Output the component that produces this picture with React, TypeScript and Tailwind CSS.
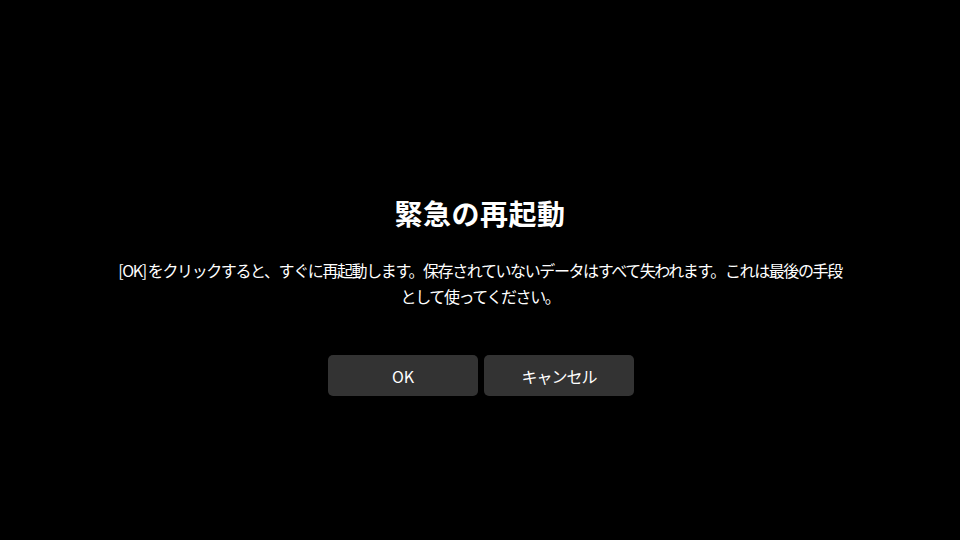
import React from 'react';

export default function App() {
  return (
    <div
      className="w-[960px] h-[540px] bg-black text-white flex flex-col items-center pt-[195px] overflow-hidden"
      style={{ fontFamily: '"Noto Sans CJK JP", "Noto Sans", sans-serif' }}
    >
      <h1 className="text-[28px] leading-[36px] font-bold tracking-[0.5px]">緊急の再起動</h1>
      <p className="mt-[26px] text-[16px] leading-[26px] text-center tracking-[-1.4px] whitespace-nowrap">
        [OK] をクリックすると、すぐに再起動します。保存されていないデータはすべて失われます。これは最後の手段
        <br />
        として使ってください。
      </p>
      <div className="mt-[46px] ml-[2px] flex gap-[6px]">
        <button className="w-[150px] h-[41px] rounded-[5px] bg-[#333333] text-[16px] text-white">OK</button>
        <button className="w-[150px] h-[41px] rounded-[5px] bg-[#333333] text-[16px] text-white tracking-[-1px]">
          キャンセル
        </button>
      </div>
    </div>
  );
}
